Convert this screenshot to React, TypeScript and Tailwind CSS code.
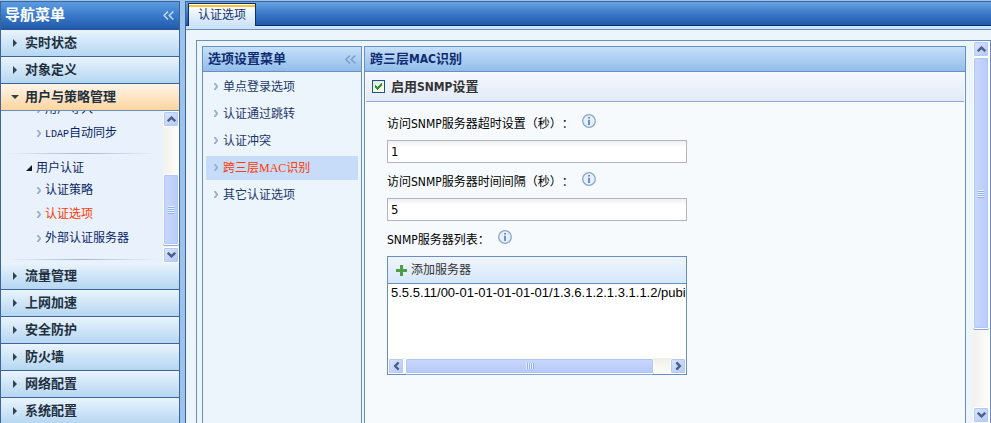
import clsx from "clsx";
import type { ReactNode } from "react";

const MENU_TOP = ["实时状态", "对象定义"];
const MENU_BOTTOM = ["流量管理", "上网加速", "安全防护", "防火墙", "网络配置", "系统配置"];

const AUTH_LINKS = [
  { label: "认证策略", active: false },
  { label: "认证选项", active: true },
  { label: "外部认证服务器", active: false },
];

const OPTION_LINKS: { label: ReactNode; key: string; active?: boolean }[] = [
  { key: "sso", label: "单点登录选项" },
  { key: "redirect", label: "认证通过跳转" },
  { key: "conflict", label: "认证冲突" },
  {
    key: "mac",
    label: (
      <>
        跨三层<span className="font-['Liberation_Serif',serif]">MAC</span>识别
      </>
    ),
    active: true,
  },
  { key: "other", label: "其它认证选项" },
];

function DoubleChevron({ className }: { className?: string }) {
  return (
    <svg aria-hidden="true" className={className} width="11" height="9" viewBox="0 0 11 9" fill="none" stroke="currentColor" strokeWidth="1.5">
      <path d="M5 0.5 1 4.5l4 4M10.3 0.5l-4 4 4 4" />
    </svg>
  );
}

function Bullet() {
  return (
    <svg aria-hidden="true" className="shrink-0" width="4" height="7" viewBox="0 0 4 7" fill="#9aaeca">
      <path d="M0 0h1.6L4 3v1L1.6 7H0V6l1.8-2V3L0 1z" />
    </svg>
  );
}

const ARROW_ROTATION = {
  up: "",
  right: "rotate-90",
  down: "rotate-180",
  left: "-rotate-90",
};

function ScrollButton({ dir, label }: { dir: keyof typeof ARROW_ROTATION; label: string }) {
  return (
    <button
      type="button"
      aria-label={label}
      className="flex size-4 shrink-0 items-center justify-center rounded-[2px] border border-white bg-linear-to-br from-[#dbe5fe] to-[#b3c8f8] shadow-[inset_0_0_0_1px_#b6c9f3]"
    >
      <svg aria-hidden="true" className={ARROW_ROTATION[dir]} width="9" height="6" viewBox="0 0 9 6" fill="none" stroke="#4d6185" strokeWidth="2.4">
        <path d="M0.8 5.2 4.5 1.6 8.2 5.2" />
      </svg>
    </button>
  );
}

function Thumb({ vertical, className }: { vertical?: boolean; className?: string }) {
  return (
    <div
      className={clsx(
        "flex items-center justify-center rounded-[2px] border border-white shadow-[inset_0_0_0_1px_#b2c6f5,0_1px_0_0_#8aa7d8]",
        vertical ? "flex-col bg-linear-to-r from-[#cad8fd] to-[#b9cbfb]" : "bg-linear-to-b from-[#cad8fd] to-[#b4c8f9]",
        className,
      )}
    >
      <div className={clsx("flex gap-px", vertical && "flex-col")}>
        {[0, 1, 2, 3].map((i) => (
          <span key={i} className={clsx("bg-[#eef4fe]", vertical ? "h-px w-1.5 shadow-[0_1px_0_0_#8cb0f8]" : "h-1.5 w-px shadow-[1px_0_0_0_#8cb0f8]")} />
        ))}
      </div>
    </div>
  );
}

function MenuRow({ label, open }: { label: string; open?: boolean }) {
  return (
    <button
      type="button"
      aria-expanded={Boolean(open)}
      className={clsx(
        "flex h-[27px] w-full shrink-0 items-center border-b px-3 text-left text-[13px] font-bold text-[#222f3e]",
        open
          ? "border-[#6a8dba] bg-linear-to-b from-[#fff5e8] to-[#fdd5a0]"
          : "border-[#3f6595] bg-linear-to-b from-[#e9f4fd] to-[#b5d6f2]",
      )}
    >
      <span className="flex w-3 shrink-0 items-center">
        <svg aria-hidden="true" className={clsx(open && "-ml-0.5")} width={open ? 8 : 4} height={open ? 4 : 8} viewBox={open ? "0 0 8 4" : "0 0 4 8"} fill="#33424f">
          <path d={open ? "M0 0h8L4 4z" : "M0 0l4 4-4 4z"} />
        </svg>
      </span>
      {label}
    </button>
  );
}

function SubLink({ children, active }: { children: ReactNode; active?: boolean }) {
  return (
    <a href="#" className={clsx("ml-9 flex h-6 shrink-0 items-center gap-1", active ? "text-[#ff3a00]" : "text-[#0a1f66]")}>
      <Bullet />
      <span>{children}</span>
    </a>
  );
}

function Divider() {
  return <div className="mx-1.5 h-px shrink-0 bg-linear-to-r from-transparent via-[#9fb9d8] to-transparent" />;
}

function Sidebar() {
  return (
    <nav className="flex w-[180px] shrink-0 flex-col overflow-hidden border-x border-t border-[#3f6595] bg-[#e9f2fc]">
      <div className="flex h-7 shrink-0 items-center justify-between border-b border-[#2a5596] bg-linear-to-b from-[#5b9ce0] via-[#3a7aca] to-[#2159ab] pr-[5px] pl-1">
        <h1 className="text-[15px] font-bold text-white">导航菜单</h1>
        <button type="button" aria-label="收起导航菜单" className="text-[#c3dcf8]">
          <DoubleChevron />
        </button>
      </div>
      {MENU_TOP.map((label) => (
        <MenuRow key={label} label={label} />
      ))}
      <MenuRow label="用户与策略管理" open />
      <div className="flex h-[152px] shrink-0">
        <div className="flex min-w-0 flex-1 flex-col justify-end overflow-hidden pb-[3px]">
          <SubLink>用户导入</SubLink>
          <SubLink>
            <span className="font-['Liberation_Mono',monospace] text-[10px]">LDAP</span>自动同步
          </SubLink>
          <div className="h-2 shrink-0" />
          <Divider />
          <a href="#" className="mt-1 ml-[25px] flex h-5 shrink-0 items-center gap-1 text-[#0a1f66]">
            <svg aria-hidden="true" width="6" height="6" viewBox="0 0 6 6" fill="#111827">
              <path d="M6 0v6H0z" />
            </svg>
            用户认证
          </a>
          {AUTH_LINKS.map(({ label, active }) => (
            <SubLink key={label} active={active}>
              {label}
            </SubLink>
          ))}
          <div className="h-[9px] shrink-0" />
          <Divider />
        </div>
        <div className="flex w-4 shrink-0 flex-col bg-linear-to-r from-[#f2f1ec] to-[#fdfdfa]">
          <ScrollButton dir="up" label="向上滚动" />
          <div className="flex-1" />
          <Thumb vertical className="mb-0.5 h-[71px]" />
          <ScrollButton dir="down" label="向下滚动" />
        </div>
      </div>
      {MENU_BOTTOM.map((label) => (
        <MenuRow key={label} label={label} />
      ))}
    </nav>
  );
}

function InfoIcon() {
  return (
    <svg aria-hidden="true" width="14" height="14" viewBox="0 0 14 14" className="shrink-0">
      <circle cx="7" cy="7" r="6.3" fill="#e6f0fb" stroke="#8aa6cb" strokeWidth="1.3" />
      <path d="M6 3h2v1.6H6zM6 5.8h2V11H6z" fill="#6f90c0" />
    </svg>
  );
}

function FieldLabel({ htmlFor, children }: { htmlFor: string; children: ReactNode }) {
  return (
    <div className="mb-1.5 flex h-5 gap-2">
      <label htmlFor={htmlFor} className="leading-5 text-black [text-spacing-trim:space-all]">
        {children}
      </label>
      <InfoIcon />
    </div>
  );
}

function TextField({ id, label, value }: { id: string; label: string; value: string }) {
  return (
    <div className="mb-[9px]">
      <FieldLabel htmlFor={id}>{label}</FieldLabel>
      <input
        id={id}
        type="text"
        defaultValue={value}
        className="block h-[23px] w-full border border-[#b0b4c6] bg-white bg-linear-to-b from-[#efefef] to-white to-30% px-[3px] text-[13px] text-black outline-none"
      />
    </div>
  );
}

function PanelHeader({ children }: { children: ReactNode }) {
  return (
    <div className="flex h-[25px] shrink-0 items-center justify-between border-b border-[#6a8fbf] bg-linear-to-b from-[#c6e0f8] to-[#92bdea] px-[5px] text-[13px] font-bold text-[#0f2c73]">
      {children}
    </div>
  );
}

function OptionsMenu() {
  return (
    <aside className="flex w-40 shrink-0 flex-col border-x border-t border-[#6a8fbf] bg-[#edf5fc]">
      <PanelHeader>
        <h2>选项设置菜单</h2>
        <button type="button" aria-label="收起选项设置菜单" className="text-[#7d9dc6]">
          <DoubleChevron />
        </button>
      </PanelHeader>
      <ul className="px-[3px] py-px">
        {OPTION_LINKS.map(({ key, label, active }) => (
          <li key={key} className="flex h-[27px] items-center">
            <a
              href="#"
              className={clsx("flex h-6 w-full items-center gap-[5px] pl-2", active ? "bg-[#c6dcf8] text-[#ff3a00]" : "text-[#1c3768]")}
            >
              <Bullet />
              <span>{label}</span>
            </a>
          </li>
        ))}
      </ul>
    </aside>
  );
}

function ServerList() {
  return (
    <div>
      <FieldLabel htmlFor="server-list">SNMP服务器列表：</FieldLabel>
      <div className="border border-[#6a8fbf] bg-white">
        <div className="flex h-[27px] items-center border-b border-[#6a8fbf] bg-linear-to-b from-[#f0f5fd] to-[#d5e7f9] px-2">
          <button type="button" className="flex items-center gap-1 text-[#333]">
            <svg aria-hidden="true" width="11" height="11" viewBox="0 0 11 11" fill="#4f9e45" shapeRendering="crispEdges">
              <path d="M4 0h3v4h4v3H7v4H4V7H0V4h4z" />
            </svg>
            添加服务器
          </button>
        </div>
        <textarea
          id="server-list"
          wrap="off"
          readOnly
          defaultValue="5.5.5.11/00-01-01-01-01-01/1.3.6.1.2.1.3.1.1.2/pubi"
          className="block h-[74px] w-full resize-none overflow-hidden pt-px pl-[3px] font-['Liberation_Sans',sans-serif] text-[13px] leading-4 text-black outline-none"
        />
        <div className="flex h-4 bg-linear-to-b from-[#f0efea] to-[#fdfdfa]">
          <ScrollButton dir="left" label="向左滚动" />
          <Thumb className="ml-px w-[249px]" />
          <div className="flex-1" />
          <ScrollButton dir="right" label="向右滚动" />
        </div>
      </div>
    </div>
  );
}

function SettingsPanel() {
  return (
    <section className="flex min-w-0 flex-1 flex-col border-x border-t border-[#6a8fbf] bg-[#f6fafd]">
      <PanelHeader>
        <h2>
          跨三层<span className="text-xs">MAC</span>识别
        </h2>
      </PanelHeader>
      <div className="mx-px mt-px flex h-[29px] shrink-0 items-center border-b border-[#8fa9d0] bg-linear-to-b from-[#f5f8fd] to-[#e2e9f8] pl-1.5">
        <label className="flex items-center gap-1.5 text-[13px] font-bold text-[#333]">
          <span className="grid size-[13px]">
            <input type="checkbox" defaultChecked className="peer col-start-1 row-start-1 size-[13px] appearance-none border border-[#1c5180] bg-linear-to-br from-[#e4e4de] to-white" />
            <svg aria-hidden="true" className="pointer-events-none invisible col-start-1 row-start-1 peer-checked:visible" width="13" height="13" viewBox="0 0 13 13" fill="#21a121" shapeRendering="crispEdges">
              <path d="M3 5h1v1h1v1h1V6h1V5h1V4h1V3h1v3H9v1H8v1H7v1H6v1H5V9H4V8H3z" />
            </svg>
          </span>
          <span>
            启用<span className="text-xs">SNMP</span>设置
          </span>
        </label>
      </div>
      <form className="w-full max-w-[322px] pt-3 pl-[22px]">
        <TextField id="timeout" label="访问SNMP服务器超时设置（秒）：" value="1" />
        <TextField id="interval" label="访问SNMP服务器时间间隔（秒）：" value="5" />
        <ServerList />
      </form>
    </section>
  );
}

export default function App() {
  return (
    <div className="flex h-screen gap-[5px] overflow-hidden bg-[#9bc3ee] pt-px font-['DejaVu_Sans_Condensed','DejaVu_Sans','Noto_Sans_CJK_SC',sans-serif] text-xs">
      <Sidebar />
      <main className="flex min-w-0 flex-1 flex-col border-t border-l border-[#3f6595] bg-[#edf5fc]">
        <div className="flex h-7 shrink-0 flex-col border-b border-[#6a8fbf] bg-[#cbe2f8]">
          <div role="tablist" className="flex h-6 items-end border-b border-[#0f2f66] bg-linear-to-b from-[#68a3e2] via-[#3b78c8] to-[#2159ab] pl-0.5">
            <button
              type="button"
              role="tab"
              aria-selected="true"
              className="-mb-px flex h-[23px] w-[68px] items-center justify-center border-x border-t border-[#0f2f66] bg-linear-to-b from-white to-[#cbe2f8] text-[#12306b] shadow-[inset_0_1px_0_0_#fff,inset_0_3px_0_0_#ffc030]"
            >
              认证选项
            </button>
          </div>
        </div>
        <div className="mt-2.5 ml-2.5 flex min-h-0 flex-1 border-x border-t border-[#6a8fbf]">
          <div className="flex min-w-0 flex-1 gap-0.5 overflow-hidden pt-[5px] pr-[7px] pl-[5px]">
            <OptionsMenu />
            <SettingsPanel />
          </div>
          <div className="flex w-[17px] shrink-0 flex-col bg-linear-to-r from-[#f2f1ec] to-[#fdfdfa] pr-px">
            <ScrollButton dir="up" label="向上滚动" />
            <Thumb vertical className="h-[272px]" />
            <div className="flex-1" />
            <ScrollButton dir="down" label="向下滚动" />
          </div>
        </div>
      </main>
    </div>
  );
}
